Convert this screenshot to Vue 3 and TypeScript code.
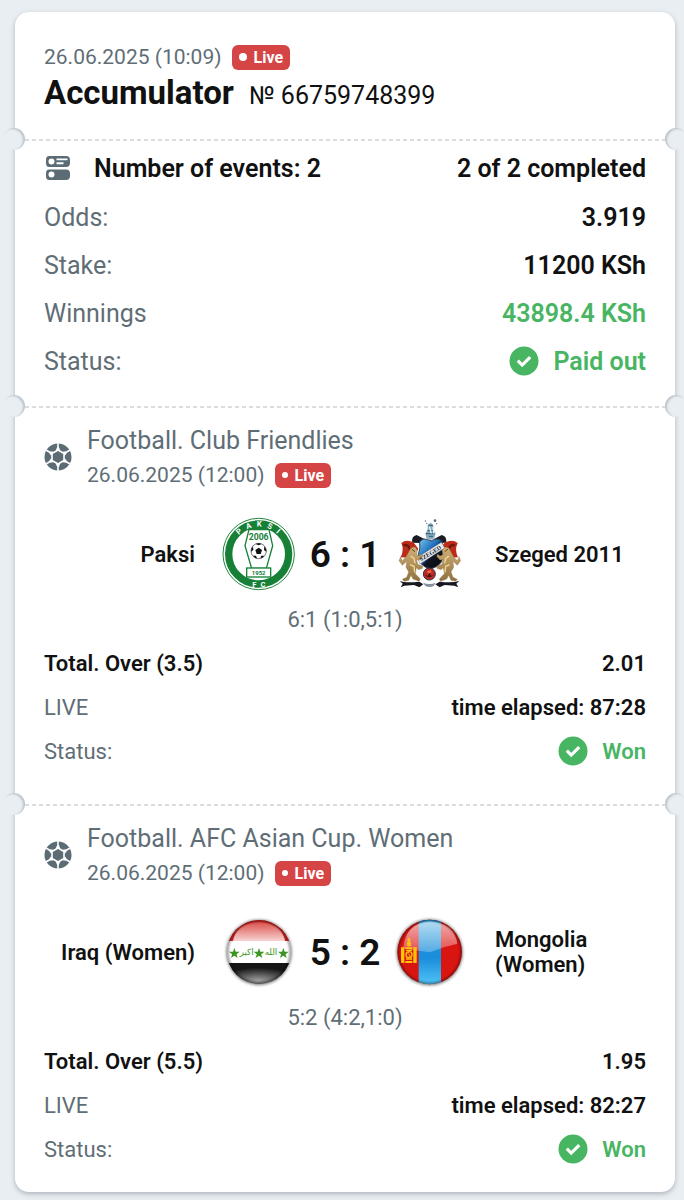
<script setup lang="ts">
interface RingLetter {
  char: string
  angle: number
}

interface BetEvent {
  id: number
  title: string
  date: string
  home: string
  away: string
  homeCrest: 'paksi' | 'iraq'
  awayCrest: 'szeged' | 'mongolia'
  score: string
  periods: string
  market: string
  odds: string
  elapsed: string
}

const summary = [
  { label: 'Odds:', value: '3.919' },
  { label: 'Stake:', value: '11200 KSh' },
  { label: 'Winnings', value: '43898.4 KSh', positive: true },
  { label: 'Status:', value: 'Paid out', positive: true, check: true },
]

const events: BetEvent[] = [
  {
    id: 1,
    title: 'Football. Club Friendlies',
    date: '26.06.2025 (12:00)',
    home: 'Paksi',
    away: 'Szeged 2011',
    homeCrest: 'paksi',
    awayCrest: 'szeged',
    score: '6 : 1',
    periods: '6:1 (1:0,5:1)',
    market: 'Total. Over (3.5)',
    odds: '2.01',
    elapsed: 'time elapsed: 87:28',
  },
  {
    id: 2,
    title: 'Football. AFC Asian Cup. Women',
    date: '26.06.2025 (12:00)',
    home: 'Iraq (Women)',
    away: 'Mongolia (Women)',
    homeCrest: 'iraq',
    awayCrest: 'mongolia',
    score: '5 : 2',
    periods: '5:2 (4:2,1:0)',
    market: 'Total. Over (5.5)',
    odds: '1.95',
    elapsed: 'time elapsed: 82:27',
  },
]

const ringLetters: RingLetter[] = [
  { char: 'P', angle: -41 },
  { char: 'A', angle: -20 },
  { char: 'K', angle: 1 },
  { char: 'S', angle: 22 },
  { char: 'I', angle: 41 },
]

const star = 'M0 -16 L4 -5 L16 -4.500 L6.600 2.700 L10 14 L0 7.300 L-10 14 L-6.600 2.700 L-16 -4.500 L-4 -5 Z'
const spokes = [0, 60, 120, 180, 240, 300]
</script>

<template>
  <main class="page">
    <article class="ticket">
      <header class="part head">
        <p class="when">
          <time>26.06.2025 (10:09)</time>
          <span class="live"><i class="dot"></i>Live</span>
        </p>
        <div class="title-row">
          <h1>Accumulator</h1>
          <span class="number">№ 66759748399</span>
        </div>
      </header>

      <section class="part summary">
        <div class="count-row">
          <svg class="small-icon" viewBox="0 0 28 28" aria-hidden="true">
            <path fill="#5b6c75" fill-rule="evenodd" d="M5 2H22Q26 2 26 6V9Q26 13 22 13H5Q2 13 2 9V6Q2 2 5 2ZM7.500 4.500a3 3 0 1 0 0 6a3 3 0 1 0 0-6ZM12.500 4.500V6.300H23.500V4.500ZM12.500 8.300V10.200H19.500V8.300Z" />
            <path fill="#5b6c75" fill-rule="evenodd" d="M5 15.500H22Q26 15.500 26 19.500V22Q26 26 22 26H5Q2 26 2 22V19.500Q2 15.500 5 15.500ZM7.500 17.500a3 3 0 1 0 0 6a3 3 0 1 0 0-6Z" />
          </svg>
          <h2>Number of events: 2</h2>
          <strong>2 of 2 completed</strong>
        </div>
        <dl>
          <div v-for="row in summary" :key="row.label" class="row">
            <dt>{{ row.label }}</dt>
            <dd :class="{ positive: row.positive }">
              <svg v-if="row.check" class="check" viewBox="0 0 30 30" aria-hidden="true">
                <circle cx="15" cy="15" r="14.500" fill="#48b563" />
                <path d="M8.800 14.700l4.400 4.400l8-8" fill="none" stroke="#fff" stroke-width="3.200" />
              </svg>
              {{ row.value }}
            </dd>
          </div>
        </dl>
      </section>

      <section v-for="event in events" :key="event.id" class="part event">
        <div class="event-head">
          <svg class="small-icon" viewBox="0 0 28 28" aria-hidden="true">
            <circle cx="14" cy="14" r="13.500" fill="#5b6c75" />
            <path d="M14 7L20 10.500V17.500L14 21L8 17.500V10.500Z" fill="none" stroke="#fff" stroke-width="1.600" />
            <path
              v-for="angle in spokes"
              :key="angle"
              :transform="`rotate(${angle} 14 14)`"
              d="M13.200 0H14.800V4L16.300 7.400H11.700L13.200 4Z"
              fill="#fff"
            />
          </svg>
          <div>
            <h2>{{ event.title }}</h2>
            <p class="when">
              <time>{{ event.date }}</time>
              <span class="live"><i class="dot small"></i>Live</span>
            </p>
          </div>
        </div>

        <div class="match">
          <span class="team home">{{ event.home }}</span>

          <svg v-if="event.homeCrest === 'paksi'" class="crest" viewBox="3 9 216 216" role="img" aria-label="Paksi crest">
            <circle cx="110" cy="117" r="107" fill="#fff" stroke="#20883a" stroke-width="3" />
            <circle cx="110" cy="117" r="90" fill="none" stroke="#168037" stroke-width="22" />
            <path d="M66 46H153L147 27Q110 10 73 27Z" fill="#168037" />
            <g class="ring-text" fill="#fff">
              <text
                v-for="letter in ringLetters"
                :key="letter.char"
                x="110"
                y="35"
                :transform="`rotate(${letter.angle} 110 117)`"
              >{{ letter.char }}</text>
              <text x="97" y="216">F</text>
              <text x="123" y="216">C</text>
            </g>
            <path d="M81 44H141L152 92L133 160H89L69 92Z" fill="#fff" stroke="#168037" stroke-width="4" />
            <rect x="74" y="159" width="72" height="27" fill="#fff" stroke="#168037" stroke-width="4" />
            <text class="crest-year" x="110" y="75" fill="#168037">2006</text>
            <text class="crest-founded" x="110" y="179" fill="#168037">1952</text>
            <circle cx="110" cy="108" r="23" fill="#fff" stroke="#333" stroke-width="2" />
            <g fill="#111">
              <path d="M110 98L120 105L116 117H104L100 105Z" />
              <path d="M101 87L110 91L119 87Q110 82 101 87ZM127 94L126 105L133 110Q133 101 127 94ZM127 122L118 122L115 130Q123 129 127 122ZM93 122L102 122L105 130Q97 129 93 122ZM93 94L94 105L87 110Q87 101 93 94Z" />
            </g>
          </svg>
          <svg v-else class="crest" viewBox="3 4 216 216" role="img" aria-label="Flag of Iraq">
            <defs>
              <clipPath id="iraq-disc"><circle cx="111" cy="112" r="96" /></clipPath>
              <linearGradient id="iraq-gloss" x2="0" y2="1">
                <stop offset="0" stop-color="#fff" stop-opacity=".2" />
                <stop offset="1" stop-color="#fff" stop-opacity=".8" />
              </linearGradient>
              <radialGradient id="iraq-base" cx=".5" cy=".75" r=".55">
                <stop offset="0" stop-color="#a0a0a0" />
                <stop offset="1" stop-color="#151515" />
              </radialGradient>
              <radialGradient id="iraq-rim">
                <stop offset=".88" stop-opacity="0" />
                <stop offset="1" stop-opacity=".4" />
              </radialGradient>
            </defs>
            <circle class="halo" cx="111" cy="113" r="98" />
            <g clip-path="url(#iraq-disc)">
              <path d="M0 0H216V79H0Z" fill="#d32520" />
              <path d="M0 79H216V145H0Z" fill="#fff" />
              <path d="M0 145H216V216H0Z" fill="url(#iraq-base)" />
              <path d="M33 79Q43 25 111 22Q179 25 189 79Z" fill="url(#iraq-gloss)" />
              <g fill="#3a9620">
                <path :d="star" transform="translate(37 116)" />
                <path :d="star" transform="translate(111 116)" />
                <path :d="star" transform="translate(184 116)" />
                <text class="script" x="74" y="122">اكبر</text>
                <text class="script" x="147" y="122">الله</text>
              </g>
              <circle cx="111" cy="112" r="97" fill="url(#iraq-rim)" />
            </g>
          </svg>

          <strong class="score">{{ event.score }}</strong>

          <svg v-if="event.awayCrest === 'szeged'" class="crest" viewBox="3 9 216 216" role="img" aria-label="Szeged crest">
            <defs>
              <linearGradient id="szeged-shield" x1="0" y1="0" x2="1" y2="1">
                <stop offset="0" stop-color="#78c8f5" />
                <stop offset=".45" stop-color="#1767b5" />
                <stop offset=".55" stop-color="#101722" />
                <stop offset="1" stop-color="#05070c" />
              </linearGradient>
              <linearGradient id="szeged-gold" x2="0" y2="1">
                <stop offset="0" stop-color="#d2b076" />
                <stop offset="1" stop-color="#8f713e" />
              </linearGradient>
            </defs>
            <path d="M55 83Q51 64 68 60L91 72L80 84ZM156 83Q160 64 143 60L120 72L132 84Z" fill="#1a1c25" />
            <path d="M22 84Q36 72 58 82L73 101L58 129L20 127Q31 105 22 84ZM191 84Q176 72 153 82L138 101L153 129L192 127Q181 105 191 84Z" fill="#bd2c18" />
            <path d="M28 91Q42 86 48 104M183 91Q170 86 163 104" fill="none" stroke="#6f170f" stroke-width="7" />
            <path d="M97 69L94 55L101 46L101 30L110 23L118 30V46L125 54L121 69Q109 79 97 69Z" fill="#87aebe" />
            <path d="M103 31H116M100 47H119M96 56H123M105 64H117" stroke="#41677e" stroke-width="4" />
            <path d="M106 35L112 55M117 36L120 56" stroke="#e8f7ff" stroke-width="4" />
            <g fill="#596a79"><circle cx="94" cy="18" r="2" /><circle cx="123" cy="17" r="4" /><circle cx="98" cy="25" r="2" /><circle cx="128" cy="26" r="2" /></g>
            <path d="M77 81Q86 67 103 75Q111 81 121 73Q139 69 145 83Q140 98 146 115Q152 150 110 162Q71 152 73 119Q80 99 77 81Z" fill="url(#szeged-shield)" stroke="#384152" stroke-width="3" />
            <path d="M69 128L142 82L152 99L78 147Z" fill="#e9eef0" stroke="#555" stroke-width="1" />
            <g fill="url(#szeged-gold)" stroke="#8a6c3e" stroke-width="1">
              <path id="szeged-lion" d="M51 98L63 96L70 106L68 119L77 123L84 117L87 124L77 135L68 134L71 148L85 153L86 160L74 164L67 158L64 176L79 192L75 199L57 192L51 181L44 196L31 199L25 193L38 187L44 171L36 157L38 139L25 151L15 137L20 125L25 138L36 125L43 113Z" />
              <use href="#szeged-lion" transform="translate(215 0) scale(-1 1)" />
            </g>
            <text class="szeged-text" x="109" y="121" fill="#18212c" transform="rotate(-32 109 115)">SZEGED</text>
            <path d="M50 123L60 130L63 145M48 149L60 154L62 172M165 123L155 130L152 145M167 149L155 154L153 172" fill="none" stroke="#f1d79c" stroke-width="4" />
            <path d="M53 102L63 110M162 102L152 110" stroke="#5e4322" stroke-width="3" />
            <circle cx="106" cy="177" r="18" fill="#c02a20" stroke="#283549" stroke-width="3" />
            <path d="M93 179Q105 194 119 179L111 183L106 167L102 183Z" fill="#471419" />
            <path d="M99 168L110 165L113 172L102 176Z" fill="#f26745" />
            <path d="M17 197Q34 205 76 200L88 208L76 217L60 210L31 212L20 217L26 206ZM196 197Q178 205 137 200L124 208L137 217L152 210L181 212L193 217L187 206Z" fill="#181820" />
            <path d="M87 203Q106 211 125 203L119 213Q106 219 94 213Z" fill="#85929d" />
          </svg>
          <svg v-else class="crest" viewBox="3 4 216 216" role="img" aria-label="Flag of Mongolia">
            <defs>
              <clipPath id="mongolia-disc"><circle cx="107" cy="112" r="97" /></clipPath>
              <linearGradient id="mongolia-blue" x2="0" y2="1">
                <stop offset="0" stop-color="#279bd9" />
                <stop offset=".6" stop-color="#1a8ddc" />
                <stop offset="1" stop-color="#55c8f8" />
              </linearGradient>
              <linearGradient id="mongolia-gloss" x2="0" y2="1">
                <stop offset="0" stop-color="#fff" stop-opacity=".65" />
                <stop offset="1" stop-color="#fff" stop-opacity=".25" />
              </linearGradient>
              <radialGradient id="mongolia-rim">
                <stop offset=".88" stop-opacity="0" />
                <stop offset="1" stop-opacity=".4" />
              </radialGradient>
            </defs>
            <circle class="halo" cx="107" cy="113" r="99" />
            <g clip-path="url(#mongolia-disc)">
              <path d="M0 0H216V216H0Z" fill="#d91512" />
              <path d="M74 0H141V216H74Z" fill="url(#mongolia-blue)" />
              <path d="M27 102Q36 24 107 20Q181 25 190 87Q146 96 108 113Q68 107 27 102Z" fill="url(#mongolia-gloss)" />
              <g fill="#ffc20c">
                <path d="M21 98H31V145H21ZM58 98H68V145H58ZM34 98H55V103H34ZM34 139H55V145H34Z" />
                <circle cx="45" cy="86" r="6" />
                <path d="M45 68Q53 77 47 81H42Q37 77 45 68Z" />
              </g>
              <path d="M36 107H54M36 133H54M39 90Q45 97 51 90" fill="none" stroke="#ffc20c" stroke-width="4" />
              <circle cx="45" cy="120" r="9" fill="none" stroke="#ffc20c" stroke-width="4" />
              <path d="M45 111Q38 117 45 120Q52 124 45 129" fill="none" stroke="#ffc20c" stroke-width="3" />
              <circle cx="107" cy="112" r="98" fill="url(#mongolia-rim)" />
            </g>
          </svg>

          <span class="team away">{{ event.away }}</span>
        </div>

        <p class="periods">{{ event.periods }}</p>

        <dl class="details">
          <div class="row">
            <dt class="market">{{ event.market }}</dt>
            <dd>{{ event.odds }}</dd>
          </div>
          <div class="row">
            <dt>LIVE</dt>
            <dd>{{ event.elapsed }}</dd>
          </div>
          <div class="row">
            <dt>Status:</dt>
            <dd class="positive">
              <svg class="check" viewBox="0 0 30 30" aria-hidden="true">
                <circle cx="15" cy="15" r="14.500" fill="#48b563" />
                <path d="M8.800 14.700l4.400 4.400l8-8" fill="none" stroke="#fff" stroke-width="3.200" />
              </svg>
              Won
            </dd>
          </div>
        </dl>
      </section>
    </article>
  </main>
</template>

<style>
body {
  margin: 0;
  background: #e9eef2;
}
</style>

<style scoped>
.page {
  padding: 12px 9px 8px 15px;
  background: #e9eef2;
  color: #111;
  font-family: Roboto, "Liberation Sans", sans-serif;
}

h1,
h2,
p,
dl,
dd {
  margin: 0;
}

.ticket {
  border-radius: 14px;
  background: #fff;
  box-shadow: 0 2px 5px rgb(60 75 90 / 35%);
}

.part {
  position: relative;
  padding: 0 29px;
}

.part + .part::before,
.part + .part::after {
  content: "";
  position: absolute;
  top: -11px;
  left: -12px;
  width: 22px;
  height: 22px;
  border-radius: 50%;
  background: #e9eef2;
  box-shadow: inset -2px 1px 2px rgb(60 75 90 / 25%);
}

.part + .part::after {
  right: -12px;
  left: auto;
  box-shadow: inset 2px 1px 2px rgb(60 75 90 / 25%);
}

.part + .part {
  background: repeating-linear-gradient(90deg, #dcdcdc 0 4px, transparent 4px 7px) 10px 0 / calc(100% - 20px) 2px no-repeat;
}

.head {
  padding-top: 31px;
  padding-bottom: 21px;
}

.when {
  display: flex;
  align-items: center;
  gap: 10px;
  height: 28px;
  color: #5f6e76;
  font-size: 21px;
  line-height: 28px;
}

.live {
  display: flex;
  align-items: center;
  gap: 7px;
  box-sizing: border-box;
  height: 25px;
  padding: 0 7px;
  border-radius: 6px;
  background: #d64545;
  color: #fff;
  font-size: 16px;
  font-weight: 700;
  line-height: 25px;
}

.dot {
  width: 8px;
  height: 8px;
  border-radius: 50%;
  background: #fff;
}

.dot.small {
  width: 6px;
  height: 6px;
}

.title-row {
  display: flex;
  align-items: baseline;
  gap: 15px;
  line-height: 44px;
}

h1 {
  font-size: 33px;
  font-weight: 700;
}

.number {
  font-size: 25px;
}

.summary {
  padding-top: 4px;
  padding-bottom: 21px;
}

.count-row {
  display: flex;
  align-items: center;
  height: 50px;
  font-size: 25px;
}

.count-row h2 {
  margin-left: 22px;
  font-size: 25px;
  font-weight: 600;
}

.count-row strong {
  margin-left: auto;
  font-weight: 600;
}

.small-icon {
  flex: none;
  width: 28px;
  height: 28px;
}

.row {
  display: flex;
  align-items: center;
  justify-content: space-between;
  height: 48px;
  font-size: 25px;
}

dt {
  color: #5f6e76;
}

dd {
  display: flex;
  align-items: center;
  gap: 14px;
  font-weight: 600;
}

.positive {
  color: #48b563;
}

.check {
  width: 30px;
  height: 30px;
}

.event {
  padding-top: 17px;
  padding-bottom: 31px;
}

.event:last-child {
  padding-bottom: 21px;
}

.event-head {
  display: flex;
  align-items: center;
  gap: 15px;
}

.event-head h2 {
  color: #5f6e76;
  font-size: 25px;
  font-weight: 400;
  line-height: 36px;
}

.event-head .when {
  height: 32px;
}

.match {
  display: grid;
  grid-template-columns: 1fr 72px 100px 72px 1fr;
  align-items: center;
  height: 72px;
  margin-top: 27px;
}

.team {
  font-size: 22px;
  font-weight: 600;
  line-height: 25px;
}

.home {
  padding-right: 28px;
  text-align: right;
}

.away {
  padding-left: 28px;
}

.crest {
  width: 72px;
  height: 72px;
  overflow: visible;
}

.halo {
  fill: #777;
  filter: blur(5px);
}

.ring-text {
  font-size: 23px;
  font-weight: 700;
  text-anchor: middle;
}

.crest-year {
  font-size: 26px;
  font-weight: 700;
  text-anchor: middle;
}

.crest-founded {
  font-size: 18px;
  font-weight: 700;
  text-anchor: middle;
}

.szeged-text {
  font-size: 18px;
  font-family: "Liberation Serif", serif;
  font-weight: 700;
  text-anchor: middle;
}

.script {
  font-family: "DejaVu Sans", sans-serif;
  font-size: 26px;
  text-anchor: middle;
}

.score {
  font-size: 37px;
  font-weight: 600;
  text-align: center;
  white-space: nowrap;
}

.periods {
  margin-top: 17px;
  color: #5f6e76;
  font-size: 22px;
  line-height: 26px;
  text-align: center;
}

.details {
  margin-top: 8px;
}

.details .row {
  height: 44px;
  font-size: 22px;
}

.market {
  color: #111;
  font-weight: 600;
}
</style>
